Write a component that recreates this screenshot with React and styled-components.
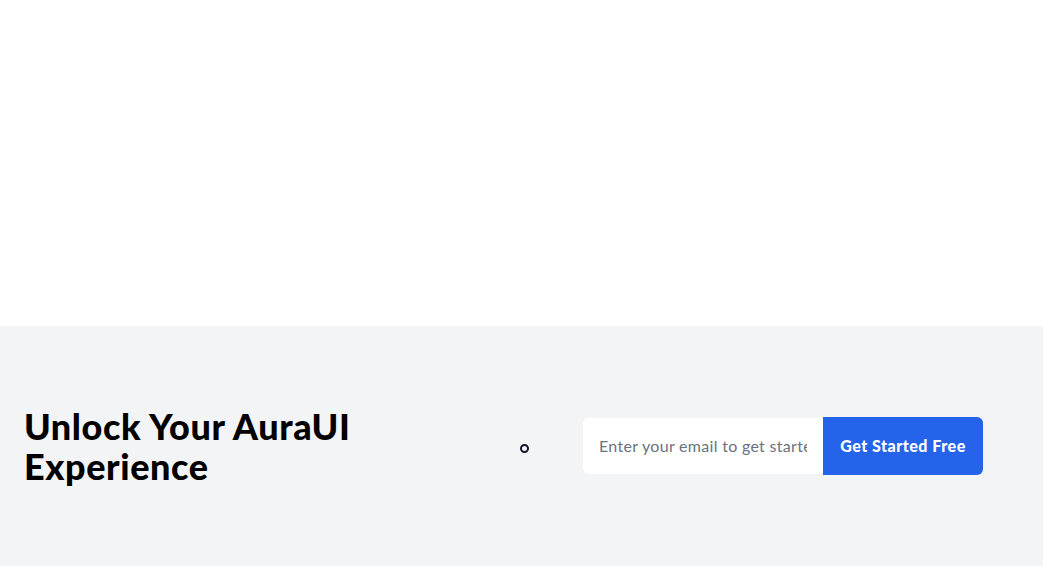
import styled, { createGlobalStyle } from 'styled-components';

const GlobalStyle = createGlobalStyle`
  * {
    box-sizing: border-box;
  }

  body {
    margin: 0;
    font-family: Lato, "Noto Sans", sans-serif;
    background: #ffffff;
    color: #000000;
  }
`;

const Page = styled.div`
  display: flex;
  flex-direction: column;
`;

const TopArea = styled.div`
  height: 326px;
  background: #ffffff;
`;

const CtaSection = styled.section`
  background: #f3f4f6;
  padding: 80px 60px 80px 24px;
`;

const CtaRow = styled.div`
  display: flex;
  align-items: center;
`;

const Heading = styled.h2`
  width: 444px;
  margin: 0;
  font-size: 36px;
  line-height: 40px;
  font-weight: 900;
  letter-spacing: 0.6px;
  color: #000000;
`;

const Ring = styled.span`
  width: 9px;
  height: 9px;
  margin: 4px 54px 0 53px;
  border: 2px solid #111827;
  border-radius: 50%;
  flex-shrink: 0;
`;

const Form = styled.form`
  display: flex;
  align-items: stretch;
`;

const EmailInput = styled.input`
  width: 240px;
  height: 56px;
  padding: 0 16px;
  border: none;
  border-radius: 6px 0 0 6px;
  background: #ffffff;
  font-family: inherit;
  font-size: 16px;
  letter-spacing: 0.3px;
  color: #111827;
  outline: none;

  &::placeholder {
    color: #6b7280;
  }
`;

const SubmitButton = styled.button`
  width: 160px;
  height: 58px;
  margin-top: -1px;
  border: none;
  border-radius: 0 6px 6px 0;
  background: #2563eb;
  color: #ffffff;
  font-family: inherit;
  font-size: 16px;
  font-weight: 900;
  letter-spacing: 0.5px;
  cursor: pointer;
`;

export default function App() {
  return (
    <Page>
      <GlobalStyle />
      <TopArea />
      <CtaSection>
        <CtaRow>
          <Heading>Unlock Your AuraUI Experience</Heading>
          <Ring />
          <Form onSubmit={(e) => e.preventDefault()}>
            <EmailInput type="email" placeholder="Enter your email to get started" />
            <SubmitButton type="submit">Get Started Free</SubmitButton>
          </Form>
        </CtaRow>
      </CtaSection>
    </Page>
  );
}
